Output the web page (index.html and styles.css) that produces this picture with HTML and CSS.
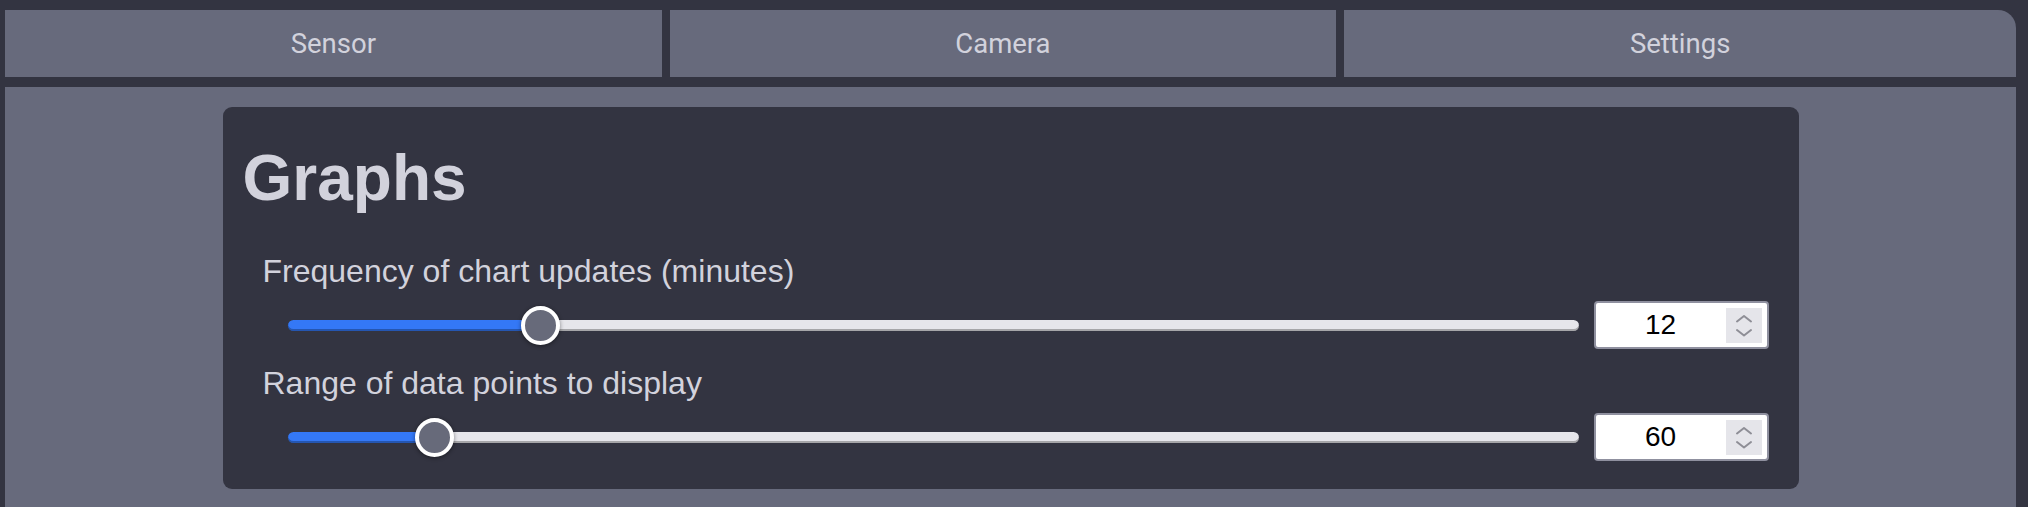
FILE: index.html
```html
<!DOCTYPE html>
<html lang="en">
<head>
<meta charset="utf-8">
<title>Graphs settings</title>
<link rel="stylesheet" href="styles.css">
</head>
<body>
<div class="app">
  <nav class="tabs">
    <button class="tab">Sensor</button>
    <button class="tab">Camera</button>
    <button class="tab tab-last">Settings</button>
  </nav>
  <main class="panel">
    <section class="card">
      <h1 class="card-title">Graphs</h1>
      <div class="field">
        <label class="field-label">Frequency of chart updates (minutes)</label>
        <div class="field-row">
          <input class="slider" type="range" min="1" max="60" value="12" style="--f:0.18644">
          <div class="numbox">
            <input class="num" type="number" value="12">
            <span class="spin">
              <svg width="36" height="35" viewBox="0 0 36 35"><polyline points="11,13.5 18,8 25,13.5" /><polyline points="11,22 18,27.5 25,22" /></svg>
            </span>
          </div>
        </div>
      </div>
      <div class="field">
        <label class="field-label">Range of data points to display</label>
        <div class="field-row">
          <input class="slider" type="range" min="10" max="500" value="60" style="--f:0.10204">
          <div class="numbox">
            <input class="num" type="number" value="60">
            <span class="spin">
              <svg width="36" height="35" viewBox="0 0 36 35"><polyline points="11,13.5 18,8 25,13.5" /><polyline points="11,22 18,27.5 25,22" /></svg>
            </span>
          </div>
        </div>
      </div>
    </section>
  </main>
</div>
</body>
</html>
```
FILE: styles.css
```css
html, body {
  margin: 0;
  padding: 0;
  background: #333441;
  overflow: hidden;
}

body {
  padding: 10px 12px 0 5px;
  font-family: "Liberation Sans", Arial, sans-serif;
}

.app {
  display: flex;
  flex-direction: column;
  gap: 10px;
}

.tabs {
  display: flex;
  gap: 8px;
  height: 67px;
}

.tab {
  flex: 1 1 auto;
  border: 0;
  margin: 0;
  padding: 0;
  background: #676a7c;
  color: #d2d2dc;
  font-family: Roboto, "Liberation Sans", sans-serif;
  font-size: 27.5px;
  line-height: 67px;
  text-align: center;
}

.tab-last {
  border-top-right-radius: 18px;
}

.panel {
  background: #676a7c;
  padding: 20px 0 60px;
}

.card {
  width: 1576px;
  box-sizing: border-box;
  margin: 0 auto;
  background: #333441;
  border-radius: 9px;
  padding: 0 30px 28px 20px;
}

.card-title {
  margin: 0;
  padding-top: 34px;
  font-size: 64px;
  line-height: 74px;
  font-weight: bold;
  color: #d2d2dc;
}

.field {
  margin-top: 16px;
}

.card-title + .field {
  margin-top: 38px;
}

.field-label {
  display: block;
  margin-left: 20px;
  font-size: 32px;
  line-height: 37px;
  color: #d2d2dc;
}

.field-row {
  display: flex;
  align-items: center;
  gap: 15px;
  margin-top: 11px;
  margin-left: 45px;
  height: 48px;
}

.slider {
  -webkit-appearance: none;
  appearance: none;
  flex: 1 1 auto;
  min-width: 0;
  margin: 0;
  height: 39px;
  background: transparent;
}

.slider::-webkit-slider-runnable-track {
  height: 11px;
  border-radius: 6px;
  background: linear-gradient(to right, #3478f6 calc(19.5px + var(--f) * (100% - 39px)), #e6e6eb 0);
  box-shadow: inset 0 -2px 0 rgba(0, 0, 0, 0.28);
}

.slider::-webkit-slider-thumb {
  -webkit-appearance: none;
  appearance: none;
  width: 39px;
  height: 39px;
  box-sizing: border-box;
  border-radius: 50%;
  border: 4px solid #ffffff;
  background: #676a7a;
  margin-top: -14px;
  box-shadow: 0 1px 4px rgba(0, 0, 0, 0.45);
}

.numbox {
  flex: 0 0 175px;
  width: 175px;
  min-width: 0;
  height: 48px;
  box-sizing: border-box;
  display: flex;
  align-items: center;
  background: #ffffff;
  border: 2px solid #8f909f;
  border-radius: 4px;
  padding: 0 5px 0 0;
}

.num {
  flex: 1 1 0;
  width: 0;
  min-width: 0;
  border: 0;
  outline: none;
  background: transparent;
  font-family: "Liberation Sans", Arial, sans-serif;
  font-size: 28px;
  color: #000000;
  text-align: center;
  padding: 0;
  -moz-appearance: textfield;
}

.num::-webkit-inner-spin-button,
.num::-webkit-outer-spin-button {
  -webkit-appearance: none;
  margin: 0;
}

.spin {
  display: flex;
  flex: 0 0 36px;
  width: 36px;
  height: 35px;
  background: #e5e5ea;
}

.spin polyline {
  fill: none;
  stroke: #8e8e96;
  stroke-width: 2;
  stroke-linecap: round;
  stroke-linejoin: round;
}
```
